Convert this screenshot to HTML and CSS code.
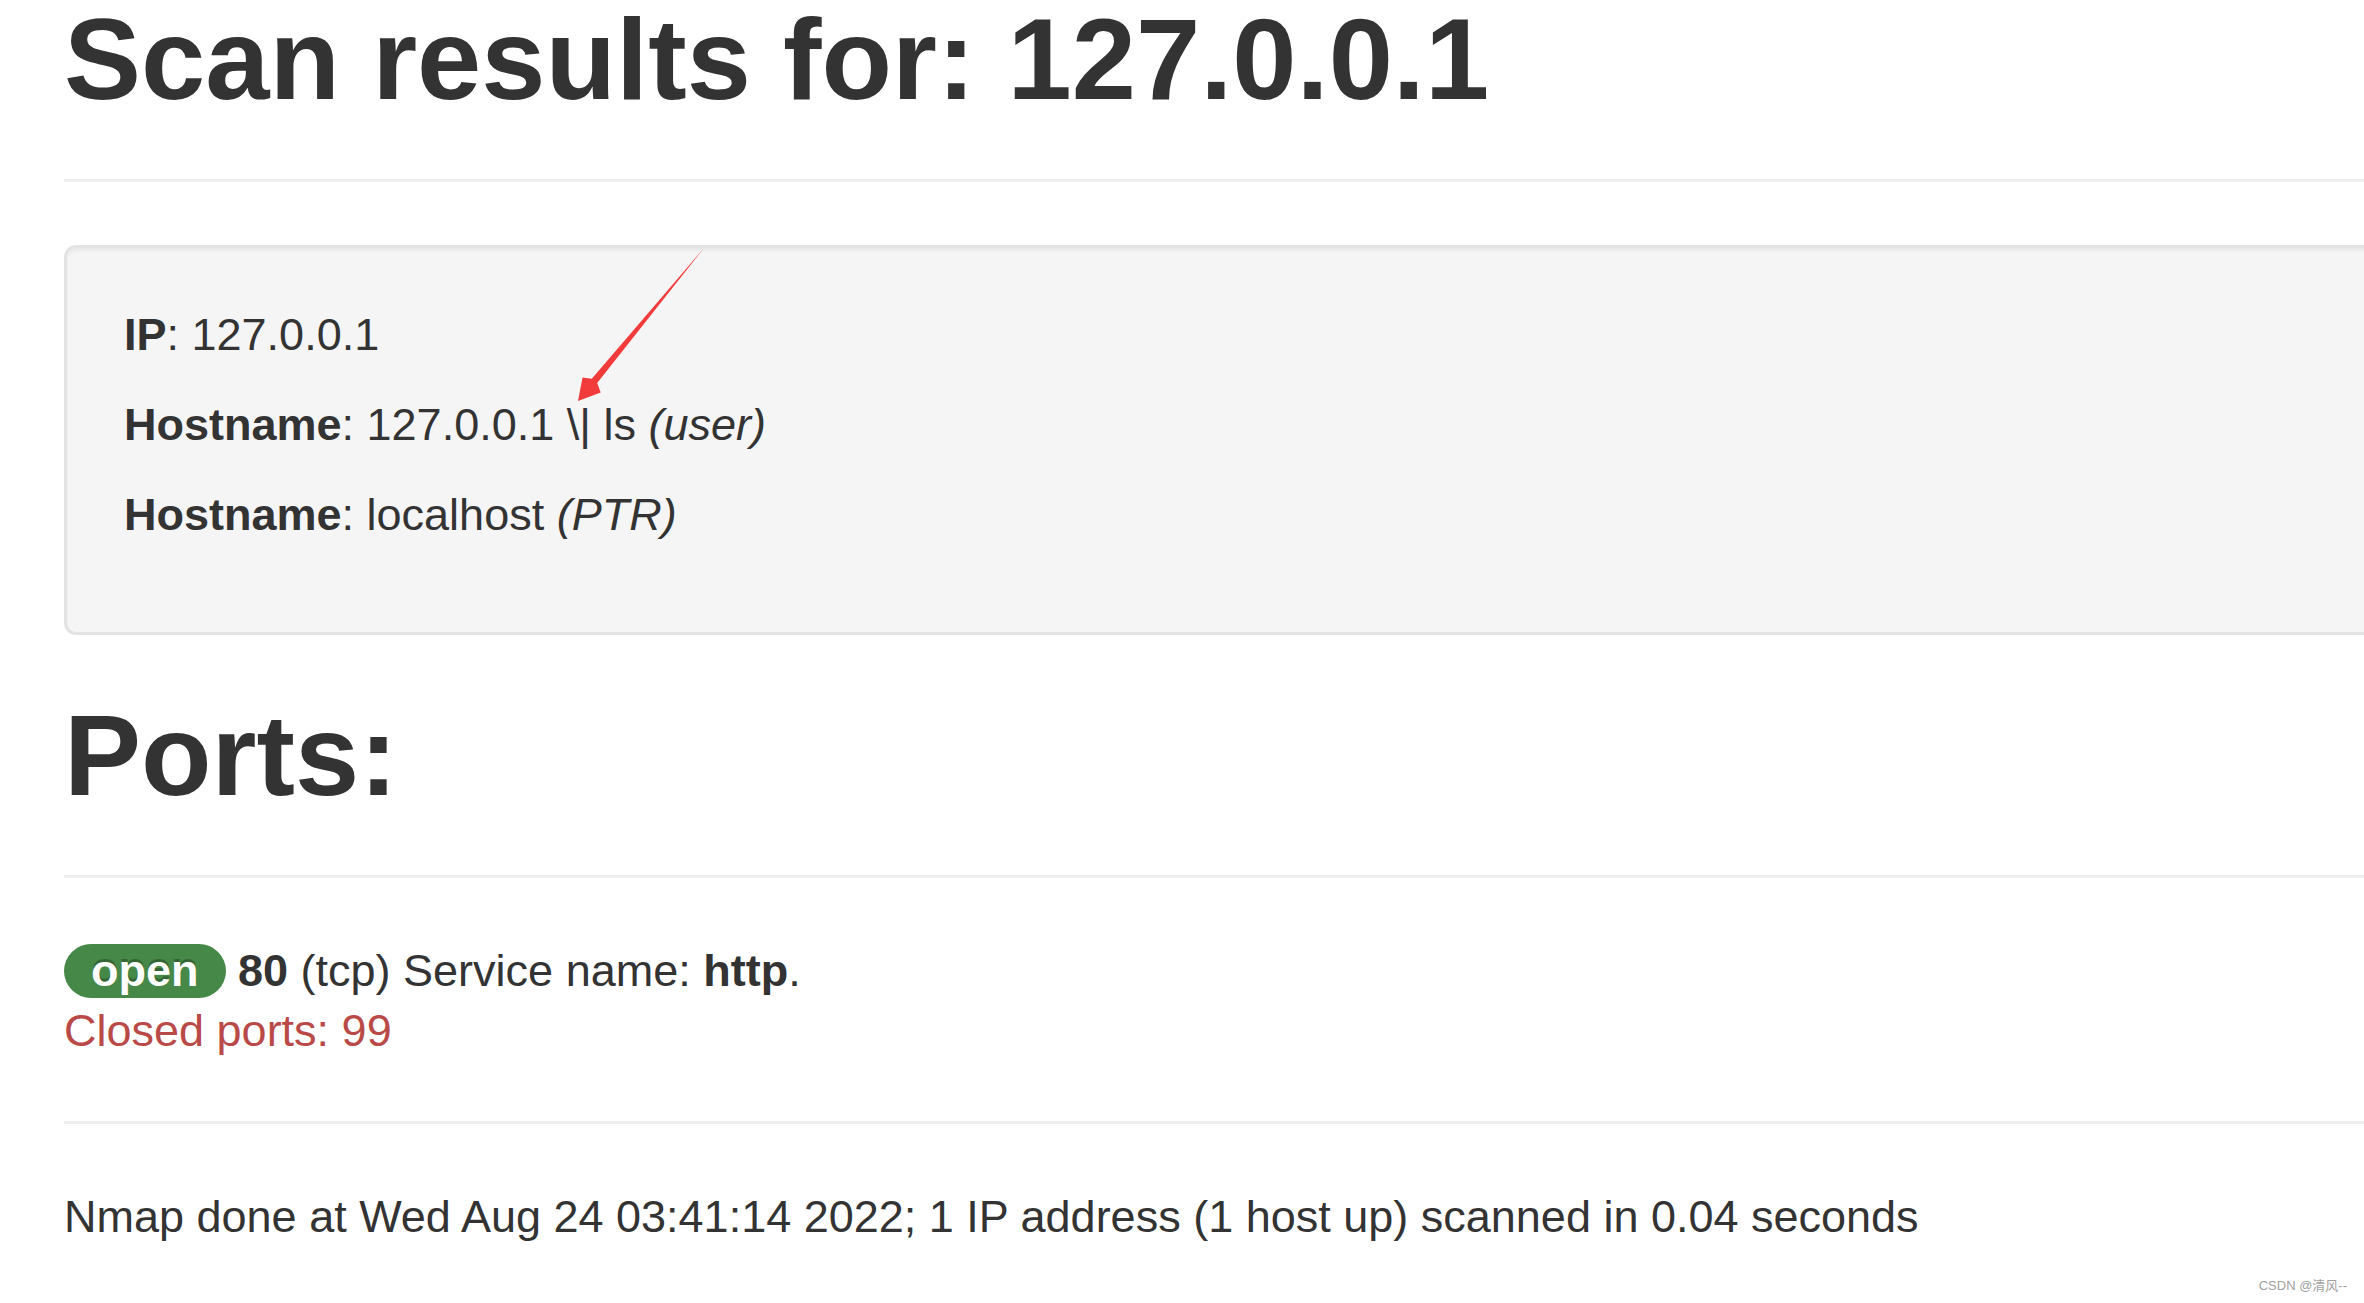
FILE: index.html
```html
<!DOCTYPE html>
<html lang="en">
<head>
<meta charset="utf-8">
<title>Scan results for: 127.0.0.1</title>
<link rel="stylesheet" href="styles.css">
</head>
<body>
<div class="container">
  <h1 class="title title-first">Scan results for: 127.0.0.1</h1>
  <hr class="rule">
  <div class="well">
    <p class="info"><b>IP</b>: 127.0.0.1</p>
    <p class="info"><b>Hostname</b>: 127.0.0.1 \| ls <i>(user)</i></p>
    <p class="info"><b>Hostname</b>: localhost <i>(PTR)</i></p>
  </div>
  <h1 class="title">Ports:</h1>
  <hr class="rule">
  <div class="ports">
    <div class="port-line"><span class="badge">open</span> <b>80</b> (tcp) Service name: <b>http</b>.</div>
    <div class="closed">Closed ports: 99</div>
  </div>
  <hr class="rule">
  <p class="summary">Nmap done at Wed Aug 24 03:41:14 2022; 1 IP address (1 host up) scanned in 0.04 seconds</p>
</div>
<svg class="arrow" width="160" height="180" viewBox="0 0 160 180" aria-hidden="true">
  <polygon points="144,8 37.2,143.1 40.7,152.4 18,161 22.5,137.5 31.8,138.7" fill="#f23c3c"/>
</svg>
<div class="watermark">CSDN @清风--</div>
</body>
</html>
```
FILE: styles.css
```css
html, body {
  margin: 0;
  padding: 0;
  overflow: hidden;
  background: #fff;
}
body {
  position: relative;
  width: 2364px;
  height: 1303px;
  font-family: "Liberation Sans", Arial, "Noto Sans CJK SC", sans-serif;
  font-size: 45px;
  line-height: 60px;
  color: #333;
}
.container {
  width: 2500px;
  padding-left: 64px;
  box-sizing: border-box;
}
.title {
  font-size: 115.5px;
  line-height: 120px;
  font-weight: bold;
  margin: 30px 0;
  color: #333;
}
.title-first {
  margin-top: -1px;
}
.rule {
  height: 0;
  margin: 60px 0;
  border: 0;
  border-top: 3px solid #eee;
  border-bottom: 3px solid #fff;
}
.well {
  padding: 57px;
  margin-bottom: 60px;
  background: #f5f5f5;
  border: 3px solid #e3e3e3;
  border-radius: 12px;
  box-shadow: inset 0 3px 3px rgba(0, 0, 0, 0.05);
}
.info {
  margin: 0 0 30px;
}
.ports {
  line-height: 60px;
}
.badge {
  display: inline-block;
  padding: 6px 27px;
  font-size: 45px;
  font-weight: bold;
  line-height: 42px;
  color: #fff;
  background: #468847;
  border-radius: 27px;
  text-shadow: 0 -3px 0 rgba(0, 0, 0, 0.25);
  vertical-align: baseline;
}
.closed {
  color: #b94a48;
}
.summary {
  margin: 0;
}
.arrow {
  position: absolute;
  left: 560px;
  top: 240px;
}
.watermark {
  position: absolute;
  right: 17px;
  top: 1278px;
  font-family: "Liberation Sans", Arial, "Noto Sans CJK SC", sans-serif;
  font-size: 13px;
  line-height: 15px;
  color: #a0a0a0;
}
```
